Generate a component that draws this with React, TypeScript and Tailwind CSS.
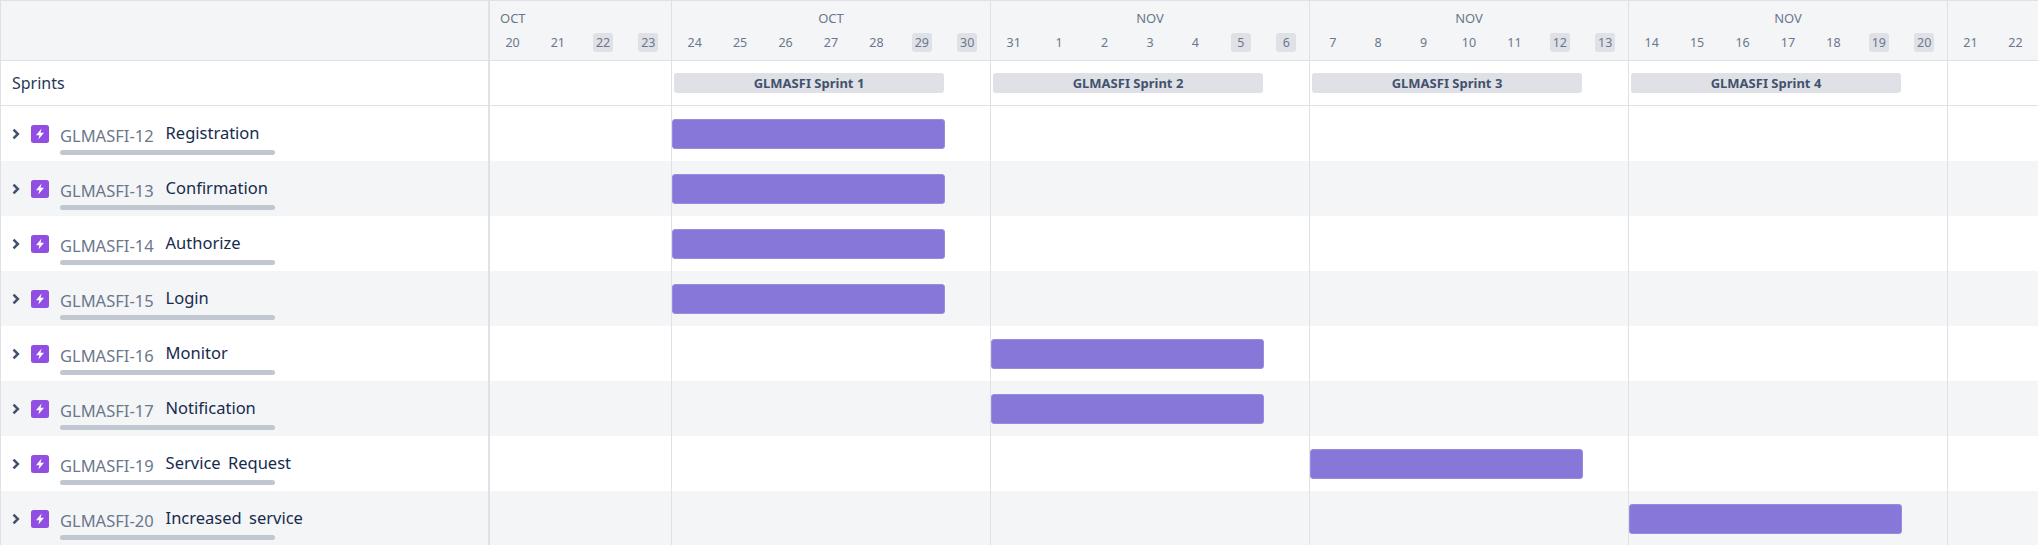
const weeks = [
  { month: 'OCT', days: ['20', '21', '22', '23'], off: [2, 3], sprint: '', cls: 'w-[181px]', left: true },
  { month: 'OCT', days: ['24', '25', '26', '27', '28', '29', '30'], off: [5, 6], sprint: 'GLMASFI Sprint 1', cls: 'w-[319px]' },
  { month: 'NOV', days: ['31', '1', '2', '3', '4', '5', '6'], off: [5, 6], sprint: 'GLMASFI Sprint 2', cls: 'w-[319px]' },
  { month: 'NOV', days: ['7', '8', '9', '10', '11', '12', '13'], off: [5, 6], sprint: 'GLMASFI Sprint 3', cls: 'w-[319px]' },
  { month: 'NOV', days: ['14', '15', '16', '17', '18', '19', '20'], off: [5, 6], sprint: 'GLMASFI Sprint 4', cls: 'w-[319px]' },
  { month: '', days: ['21', '22'], off: [], sprint: '', cls: 'w-[91px]' },
];

const issues = [
  { key: 'GLMASFI-12', title: 'Registration', week: 1 },
  { key: 'GLMASFI-13', title: 'Confirmation', week: 1 },
  { key: 'GLMASFI-14', title: 'Authorize', week: 1 },
  { key: 'GLMASFI-15', title: 'Login', week: 1 },
  { key: 'GLMASFI-16', title: 'Monitor', week: 2 },
  { key: 'GLMASFI-17', title: 'Notification', week: 2 },
  { key: 'GLMASFI-19', title: 'Service Request', week: 3 },
  { key: 'GLMASFI-20', title: 'Increased service', week: 4 },
];

function EpicIcon() {
  return (
    <svg width="18" height="18" viewBox="0 0 18 18" className="shrink-0">
      <rect width="18" height="18" rx="2.5" fill="#904ee2" />
      <path d="M10.6 3.6 5 10.2h3.4l-1 4.4L13 7.8H9.5z" fill="#fff" />
    </svg>
  );
}

function Chevron() {
  return (
    <svg width="8" height="12" viewBox="0 0 8 12" className="shrink-0">
      <path d="M1.5 1.6 5.9 6l-4.4 4.4" fill="none" stroke="#42526e" strokeWidth="2.5" />
    </svg>
  );
}

// one empty timeline row with the week separators, optional bar inside a week
function Timeline({ barWeek }: { barWeek?: number }) {
  return (
    <div className="flex h-full">
      {weeks.map((w, i) => (
        <div key={i} className={`${w.cls} shrink-0 h-full flex items-start ${i > 0 ? 'border-l border-[#dfe1e6]' : ''}`}>
          {barWeek === i && (
            <div className="mt-[13px] h-[30px] w-[273px] rounded-[3px] bg-[#8777d9] border border-[#998ce0]" />
          )}
        </div>
      ))}
    </div>
  );
}

export default function App() {
  return (
    <div className="w-[2038px] h-[545px] overflow-hidden bg-white border-l border-t border-[#dfe1e6] font-['Noto_Sans','Open_Sans',sans-serif] box-border">
      <div className="flex h-[59px] bg-[#f4f5f7] border-b border-[#dfe1e6] box-content">
        <div className="w-[489px] shrink-0 border-r-2 border-[#dfe1e6]" />
        {weeks.map((w, i) => (
          <div key={i} className={`${w.cls} shrink-0 ${i > 0 ? 'border-l border-[#dfe1e6]' : ''} flex flex-col`}>
            <div className={`h-[32px] pt-[7px] text-[13px] leading-[20px] text-[#6b778c] ${w.left ? 'pl-[10px]' : 'text-center'}`}>
              {w.month}
            </div>
            <div className="flex">
              {w.days.map((d, j) => (
                <div key={d} className="flex-1 flex justify-center">
                  <span className={`w-5 h-[19px] rounded-[3px] text-[12.5px] leading-[19px] text-center text-[#6b778c] ${w.off.includes(j) ? 'bg-[#dfe1e6]' : ''}`}>
                    {d}
                  </span>
                </div>
              ))}
            </div>
          </div>
        ))}
      </div>

      <div className="flex h-[44px] border-b border-[#dfe1e6] box-content">
        <div className="w-[489px] shrink-0 border-r-2 border-[#dfe1e6] flex items-center pl-[11px] text-base text-[#253858]">
          Sprints
        </div>
        {weeks.map((w, i) => (
          <div key={i} className={`${w.cls} shrink-0 h-full ${i > 0 ? 'border-l border-[#dfe1e6]' : ''}`}>
            {w.sprint && (
              <div className="mt-[12px] ml-[2px] w-[270px] h-[20px] rounded-[3px] bg-[#dfe1e6] text-[13px] leading-[20px] font-bold text-center text-[#42526e]">
                {w.sprint}
              </div>
            )}
          </div>
        ))}
      </div>

      {issues.map((it, idx) => (
        <div key={it.key} className={`flex h-[55px] ${idx % 2 ? 'bg-[#f4f5f7]' : 'bg-white'}`}>
          <div className="w-[489px] shrink-0 border-r-2 border-[#dfe1e6] pl-[11px] pt-[19px]">
            <div className="flex items-center h-[18px]">
              <Chevron />
              <div className="ml-[11px]">
                <EpicIcon />
              </div>
              <span className="ml-[11px] text-[16.5px] leading-[18px] mt-[3px] text-[#6b778c]">{it.key}</span>
              <span className="ml-[12px] text-[16.5px] [word-spacing:3px] leading-[18px] -mt-[3px] text-[#172b4d]">{it.title}</span>
            </div>
            <div className="ml-[48px] mt-[7px] w-[215px] h-[5px] rounded-[3px] bg-[#c1c7d0]" />
          </div>
          <div className="flex-1">
            <Timeline barWeek={it.week} />
          </div>
        </div>
      ))}
    </div>
  );
}
